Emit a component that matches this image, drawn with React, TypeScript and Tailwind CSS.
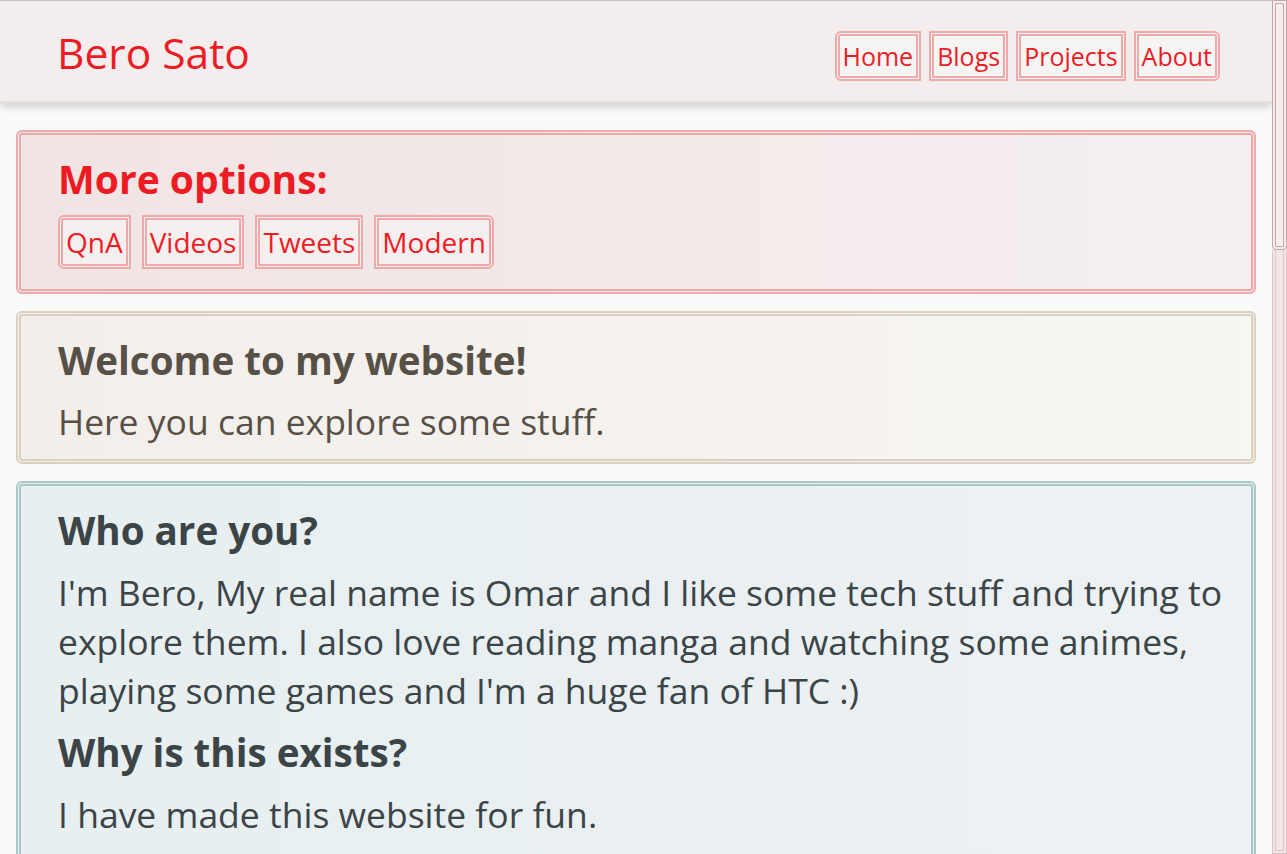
const navLinks = ["Home", "Blogs", "Projects", "About"];
const moreLinks = ["QnA", "Videos", "Tweets", "Modern"];

function LinkButton({ label, size }: { label: string; size: "nav" | "option" }) {
  return (
    <a
      href="#"
      className={
        size === "nav"
          ? "block border-[5px] border-double border-[#efa9ab] bg-[#f7f4f4] px-[3px] py-[3px] text-[25px] leading-[34px] text-[#ed1c24] first:rounded-l-md last:rounded-r-md"
          : "block border-[5px] border-double border-[#efa9ab] bg-[#f6eff0] px-[3px] py-[3px] text-[28px] leading-[38px] text-[#ed1c24] first:rounded-l-md last:rounded-r-md"
      }
    >
      {label}
    </a>
  );
}

// drawn scrollbar, the headless browser hides the real one
function Scrollbar() {
  return (
    <div className="flex h-screen w-[15px] shrink-0 flex-col bg-[#f2e6e6]">
      <div className="h-[250px] rounded-b-sm border-4 border-double border-[#c6a6a8] bg-[#f5eeee]" />
      <div className="flex-1 border-4 border-t-0 border-double border-[#dcc6c8]" />
    </div>
  );
}

export default function App() {
  return (
    <div className="flex h-screen overflow-hidden bg-[#f9f9f9] font-['Open_Sans',sans-serif]">
      <div className="min-w-0 flex-1 overflow-hidden">
        {/* header */}
        <header className="relative z-10 flex h-[103px] items-center justify-between border-t border-b-2 border-t-[#c4c4c4] border-b-[#eadfdf] bg-[#f3eded] pl-[57px] pr-[52px] shadow-[0_4px_8px_rgba(0,0,0,0.16)]">
          <h1 className="mt-[2px] text-[42.5px] leading-[57px] text-[#ed1c24]">Bero Sato</h1>
          <nav className="mt-[9px] flex gap-2">
            {navLinks.map((l) => (
              <LinkButton key={l} label={l} size="nav" />
            ))}
          </nav>
        </header>

        <main className="flex flex-col gap-[17px] px-4 pt-[27px]">
          {/* more options */}
          <section className="rounded-md border-[5px] border-double border-[#efa9ab] bg-linear-to-r from-[#f1e4e5] to-[#f5efef] pb-[20px] pl-[37px] pr-4 pt-[20px]">
            <h2 className="text-[39px] font-bold leading-[48px] text-[#ed1c24]">More options:</h2>
            <div className="mt-[12px] flex gap-[11px]">
              {moreLinks.map((l) => (
                <LinkButton key={l} label={l} size="option" />
              ))}
            </div>
          </section>

          {/* welcome */}
          <section className="rounded-md border-[5px] border-double border-[#dbd0c2] bg-linear-to-r from-[#f3eeea] to-[#f7f6f3] pb-[13px] pl-[37px] pr-4 pt-[20px] text-[#575047]">
            <h2 className="text-[38.6px] font-bold leading-[48px]">Welcome to my website!</h2>
            <p className="mt-[13px] text-[35.5px] leading-[48.5px]">Here you can explore some stuff.</p>
          </section>

          {/* about */}
          <section className="rounded-md border-[5px] border-double border-[#a9c9c9] bg-linear-to-r from-[#e7eff1] to-[#edf1f3] pb-6 pl-[37px] pr-[15px] pt-[20px] text-[#3b4447]">
            <h2 className="text-[38.6px] font-bold leading-[48px]">Who are you?</h2>
            <p className="mt-[14px] text-[35.5px] leading-[49px]">
              I'm Bero, My real name is Omar and I like some tech stuff and trying to
              <br />
              explore them. I also love reading manga and watching some animes,
              <br />
              playing some games and I'm a huge fan of HTC :)
            </p>
            <h2 className="mt-[13px] text-[38.6px] font-bold leading-[48px]">Why is this exists?</h2>
            <p className="mt-[14px] text-[35.5px] leading-[49px]">I have made this website for fun.</p>
            <div className="h-[400px]" />
          </section>
        </main>
      </div>
      <Scrollbar />
    </div>
  );
}
